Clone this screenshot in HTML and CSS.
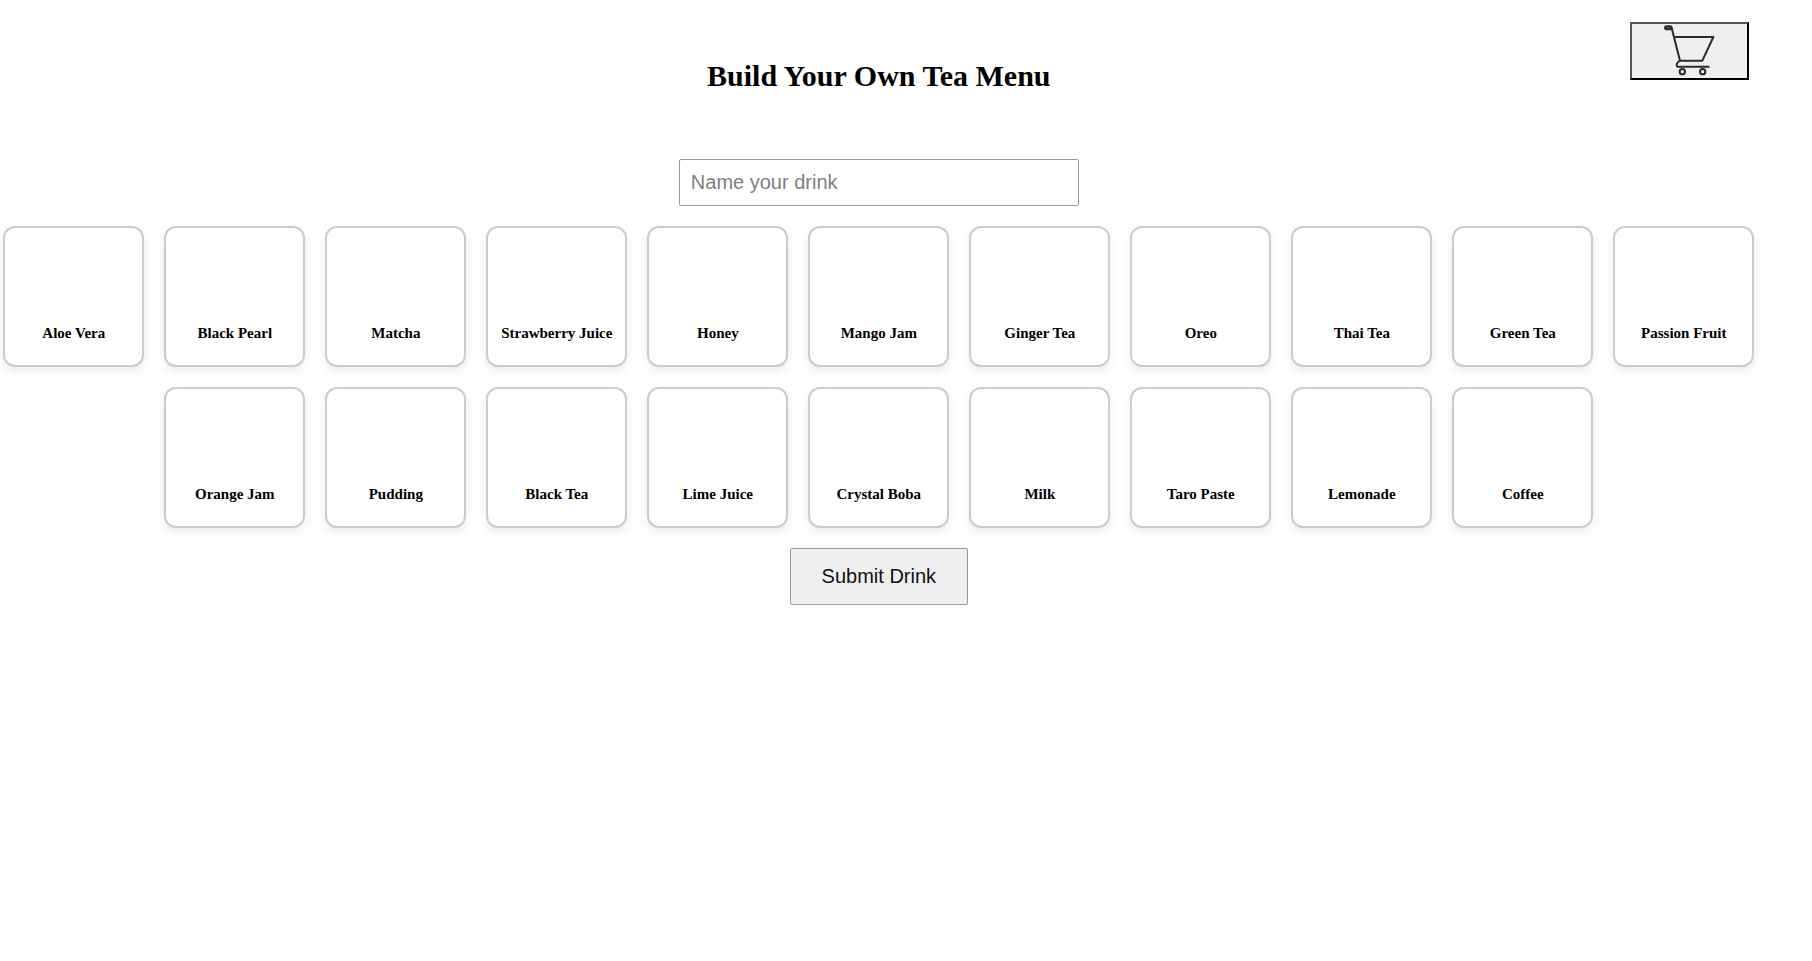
FILE: index.html
```html
<!DOCTYPE html>
<html lang="en">
<head>
<meta charset="utf-8">
<title>Build Your Own Tea Menu</title>
<link rel="stylesheet" href="styles.css">
</head>
<body>
<main class="page">
  <button class="cart" type="button" aria-label="Shopping cart">
    <svg class="cart-icon" viewBox="0 0 156 156" fill="none" stroke="#2a2a2a" stroke-width="6" stroke-linecap="round" stroke-linejoin="round" aria-hidden="true">
      <path d="M23 9 L48 107 H115 L148 36 H30"/>
      <path d="M47 107 Q33 118 40 125 H134"/>
      <rect x="3" y="4" width="20" height="9" rx="4" fill="#555"/>
      <circle cx="55" cy="140" r="8"/>
      <circle cx="116" cy="140" r="8"/>
    </svg>
  </button>
  <h1 class="title">Build Your Own Tea Menu</h1>
  <form class="builder">
    <input class="drink-name" type="text" placeholder="Name your drink" aria-label="Name your drink">
    <div class="ingredients">
      <button class="card" type="button">Aloe Vera</button>
      <button class="card" type="button">Black Pearl</button>
      <button class="card" type="button">Matcha</button>
      <button class="card" type="button">Strawberry Juice</button>
      <button class="card" type="button">Honey</button>
      <button class="card" type="button">Mango Jam</button>
      <button class="card" type="button">Ginger Tea</button>
      <button class="card" type="button">Oreo</button>
      <button class="card" type="button">Thai Tea</button>
      <button class="card" type="button">Green Tea</button>
      <button class="card" type="button">Passion Fruit</button>
      <button class="card" type="button">Orange Jam</button>
      <button class="card" type="button">Pudding</button>
      <button class="card" type="button">Black Tea</button>
      <button class="card" type="button">Lime Juice</button>
      <button class="card" type="button">Crystal Boba</button>
      <button class="card" type="button">Milk</button>
      <button class="card" type="button">Taro Paste</button>
      <button class="card" type="button">Lemonade</button>
      <button class="card" type="button">Coffee</button>
    </div>
    <button class="submit" type="submit">Submit Drink</button>
  </form>
</main>
</body>
</html>
```
FILE: styles.css
```css
* {
  box-sizing: border-box;
}

body {
  margin: 0;
  background: #fff;
  color: #000;
  font-family: "Liberation Serif", "Times New Roman", serif;
}

.page {
  position: relative;
  padding: 57px 3% 0 0;
}

.title {
  margin: 0 0 64px;
  font-size: 30px;
  line-height: 38px;
  text-align: center;
}

.cart {
  position: absolute;
  top: 22px;
  right: 63px;
  display: flex;
  justify-content: center;
  align-items: center;
  width: 119px;
  height: 58px;
  padding: 0;
  border: 2px outset #000;
  background: #efefef;
}

.cart-icon {
  width: 52px;
  height: 52px;
}

.builder {
  display: flex;
  flex-direction: column;
  align-items: center;
  gap: 20px;
}

.drink-name {
  width: 400px;
  max-width: 100%;
  height: 47px;
  padding: 0 11px;
  border: 1px solid #999;
  border-radius: 2px;
  font-family: "Liberation Sans", Arial, sans-serif;
  font-size: 20px;
}

.drink-name::placeholder {
  color: #808080;
}

.ingredients {
  display: flex;
  flex-wrap: wrap;
  justify-content: center;
  gap: 20px;
}

.card {
  display: flex;
  justify-content: center;
  align-items: flex-end;
  width: 141px;
  height: 141px;
  padding: 0 0 23px;
  border: 2px solid #ccc;
  border-radius: 12px;
  background: #fff;
  box-shadow: 0 4px 8px rgba(0, 0, 0, 0.08);
  color: #000;
  font-family: inherit;
  font-size: 15px;
  font-weight: bold;
  line-height: 17px;
}

.submit {
  height: 57px;
  padding: 0 31px;
  border: 1px solid #999;
  border-radius: 2px;
  background: #efefef;
  color: #111;
  font-family: "Liberation Sans", Arial, sans-serif;
  font-size: 20px;
}
```
